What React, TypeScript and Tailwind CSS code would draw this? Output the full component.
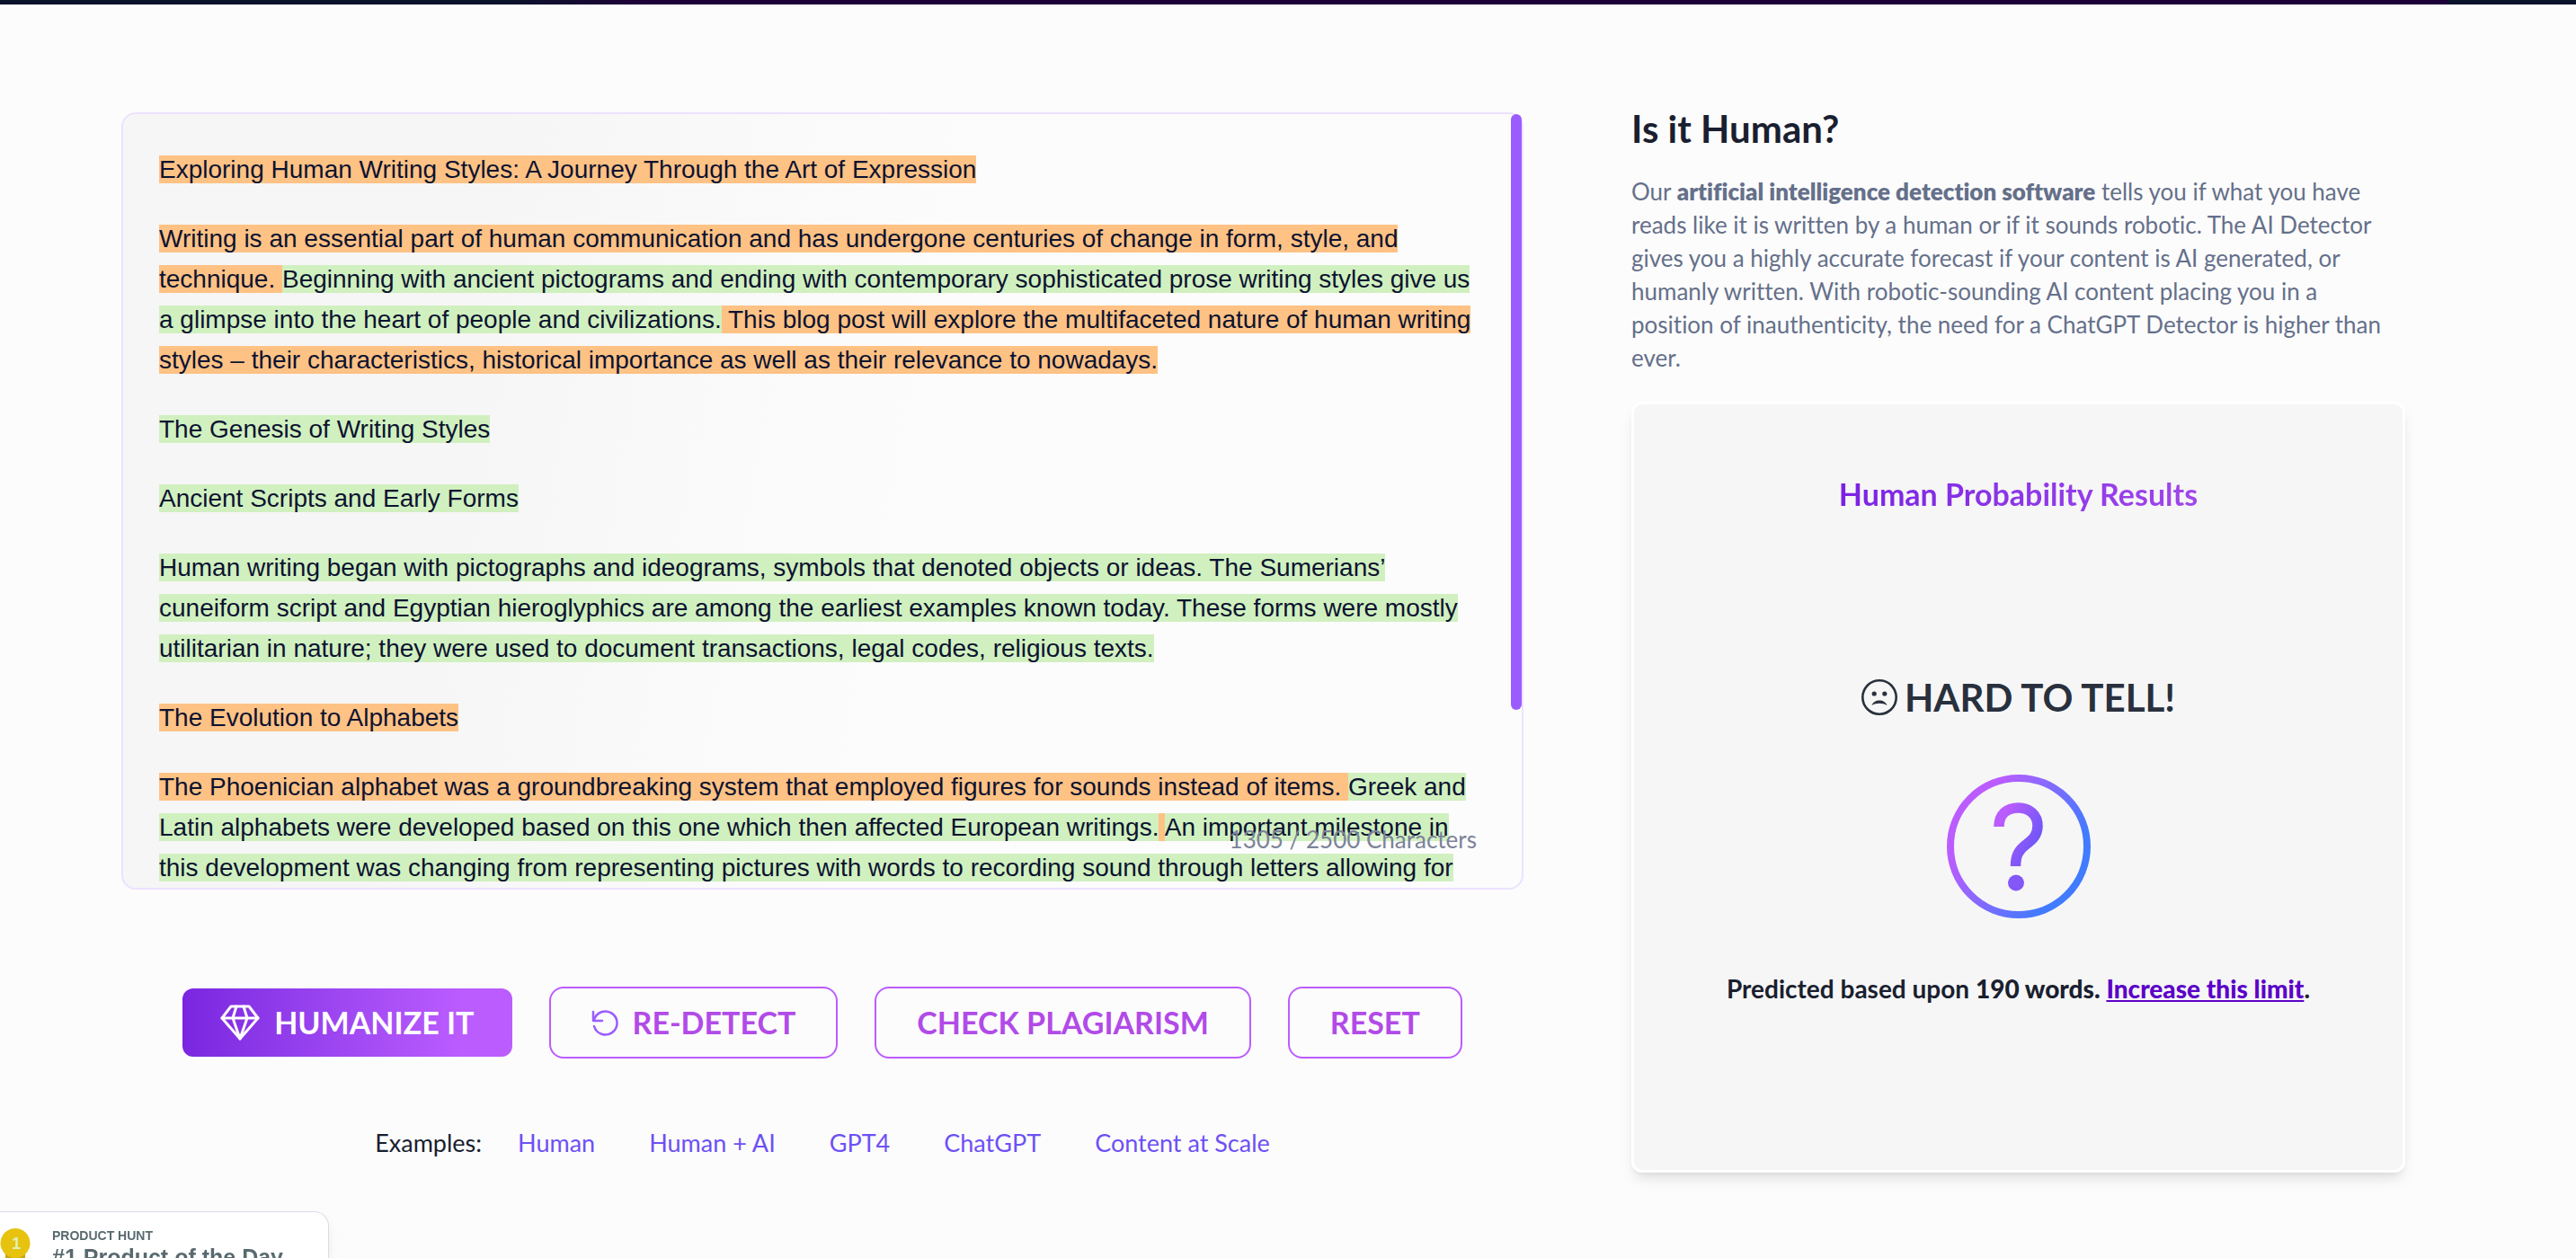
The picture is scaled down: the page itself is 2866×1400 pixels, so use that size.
import type { ReactNode } from 'react'

const examples = ['Human', 'Human + AI', 'GPT4', 'ChatGPT', 'Content at Scale']

function Human({ children }: { children: ReactNode }) {
  return <mark className="bg-[#d1f0c0] text-inherit">{children}</mark>
}

function Robot({ children }: { children: ReactNode }) {
  return <mark className="bg-[#ffc285] text-inherit">{children}</mark>
}

function DiamondIcon() {
  return (
    <svg viewBox="0 0 44 40" className="w-11 h-10" fill="none" stroke="currentColor" strokeWidth="3" strokeLinecap="round" strokeLinejoin="round" aria-hidden="true">
      <path d="M12 2h20l10 13-20 23L2 15Z" />
      <path d="M2 15h40M18 2l-4 13 8 23 8-23-4-13" />
    </svg>
  )
}

function RedoIcon() {
  return (
    <svg viewBox="0 0 30 30" className="w-[30px] h-[30px]" fill="none" stroke="#9b5cff" strokeWidth="2.5" strokeLinecap="round" strokeLinejoin="round" aria-hidden="true">
      <path d="M2 3v10h10" />
      <path d="M3 12A13 13 0 1 1 3 19" />
    </svg>
  )
}

function SadIcon() {
  return (
    <svg viewBox="0 0 40 40" className="w-10 h-10" aria-hidden="true">
      <circle cx="20" cy="20" r="18.7" fill="none" stroke="currentColor" strokeWidth="2.6" />
      <circle cx="14.2" cy="16" r="2.6" fill="currentColor" />
      <circle cx="25.8" cy="16" r="2.6" fill="currentColor" />
      <path d="M11.5 29c2-7.5 15-7.5 17 0-4.5-3-12.5-3-17 0Z" fill="currentColor" />
    </svg>
  )
}

function QuestionIcon() {
  return (
    <svg viewBox="0 0 160 160" className="w-40 h-40" fill="none" aria-hidden="true">
      <defs>
        <linearGradient id="ring" x1="30" y1="50" x2="130" y2="110" gradientUnits="userSpaceOnUse">
          <stop offset="0" stopColor="#bb5cff" />
          <stop offset="1" stopColor="#417bff" />
        </linearGradient>
        <linearGradient id="mark" x1="58" y1="56" x2="112" y2="82" gradientUnits="userSpaceOnUse">
          <stop offset="0" stopColor="#bb5cff" />
          <stop offset="1" stopColor="#5b55f5" />
        </linearGradient>
      </defs>
      <circle cx="80" cy="80" r="76" stroke="url(#ring)" strokeWidth="8" />
      <path d="M58 58C58 44 67 37 79.5 37C92 37 101 45 101 57C101 67 96 72 88 78C80 84 76.5 90 76.5 102" stroke="url(#mark)" strokeWidth="11.5" />
      <circle cx="77" cy="120.5" r="9" fill="#8457f8" />
    </svg>
  )
}

function MedalIcon() {
  return (
    <svg viewBox="0 0 34 48" className="w-[34px] h-12 shrink-0" aria-hidden="true">
      <path d="M6 26v20l11-6 11 6V26Z" fill="#c9a50e" />
      <circle cx="17" cy="16.5" r="16.5" fill="#e7c20f" />
      <text x="18" y="23" textAnchor="middle" fontSize="18" fontWeight="700" fontFamily="Liberation Sans" fill="#dcf3b8">1</text>
    </svg>
  )
}

function Editor() {
  return (
    <div className="relative rounded-2xl border-2 border-[#ece2ff] bg-[linear-gradient(100deg,#f6f6f6_25%,#fcfcfc_55%)]">
      <div className="pt-[39px] pl-10 pr-12 font-['Liberation_Sans',Helvetica,sans-serif] text-[28px] leading-[45px] text-[#0c1330] space-y-8">
        <p><Robot>Exploring Human Writing Styles: A Journey Through the Art of Expression</Robot></p>
        <p>
          <Robot>Writing is an essential part of human communication and has undergone centuries of change in form, style, and technique. </Robot>
          <Human>Beginning with ancient pictograms and ending with contemporary sophisticated prose writing styles give us a glimpse into the heart of people and civilizations.</Human>
          <Robot> This blog post will explore the multifaceted nature of human writing styles – their characteristics, historical importance as well as their relevance to nowadays.</Robot>
        </p>
        <p><Human>The Genesis of Writing Styles</Human></p>
        <p><Human>Ancient Scripts and Early Forms</Human></p>
        <p>
          <Human>Human writing began with pictographs and ideograms, symbols that denoted objects or ideas. The Sumerians’ cuneiform script and Egyptian hieroglyphics are among the earliest examples known today. These forms were mostly utilitarian in nature; they were used to document transactions, legal codes, religious texts.</Human>
        </p>
        <p><Robot>The Evolution to Alphabets</Robot></p>
        <p>
          <Robot>The Phoenician alphabet was a groundbreaking system that employed figures for sounds instead of items. </Robot>
          <Human>Greek and Latin alphabets were developed based on this one which then affected European writings.</Human>
          <Robot> </Robot>
          <Human>An important milestone in this development was changing from representing pictures with words to recording sound through letters allowing for</Human>
        </p>
      </div>
      {/* Scrollbar thumb */}
      <div className="absolute top-0 right-0 h-[77%] w-3 rounded-full bg-[#9b5cff]" />
      <p className="absolute right-[50px] bottom-9 text-[26px] leading-9 text-[#7c8399]">1305 / 2500 Characters</p>
    </div>
  )
}

const outlineButton =
  'flex items-center gap-4 h-20 px-[45px] rounded-2xl border-2 border-[#bb5cff] text-[#b14be8] text-[34px] leading-10 font-bold'

function Actions() {
  return (
    <div className="mt-[108px] flex items-center justify-center gap-[41px]">
      <button className="flex items-center gap-4 h-[76px] px-[42px] rounded-xl bg-linear-to-r from-[#7a25e0] to-[#bb5cff] to-85% text-white text-[34px] leading-10 font-bold">
        <DiamondIcon />
        HUMANIZE IT
      </button>
      <button className={outlineButton}>
        <RedoIcon />
        RE-DETECT
      </button>
      <button className={outlineButton}>CHECK PLAGIARISM</button>
      <button className={outlineButton}>RESET</button>
    </div>
  )
}

function Results() {
  return (
    <section className="mt-[30px] flex-1 rounded-xl border-3 border-white bg-[#f6f6f6] shadow-lg flex flex-col items-center">
      <h3 className="mt-20 text-[34px] leading-10 font-bold bg-linear-to-r from-[#7a20e4] to-[#a046ea] bg-clip-text text-transparent">
        Human Probability Results
      </h3>
      <p className="mt-[180px] flex items-center gap-2 text-[42px] leading-[52px] font-bold text-[#29303d]">
        <SadIcon />
        HARD TO TELL!
      </p>
      <div className="mt-[60px]">
        <QuestionIcon />
      </div>
      <p className="mt-[60px] text-[28px] leading-9 font-bold text-[#1a1f30]">
        Predicted based upon <b className="font-black">190 words.</b>{' '}
        <a href="#" className="font-black text-[#5b00c9] underline">Increase this limit</a>.
      </p>
    </section>
  )
}

function ProductHuntBadge() {
  return (
    <a href="#" className="fixed left-0 bottom-0 flex gap-6 w-[366px] h-[52px] overflow-hidden rounded-tr-2xl border-t border-r border-[#dcdce6] bg-white pt-[18px] shadow-lg font-['Liberation_Sans',Helvetica,sans-serif] font-bold text-[#586a70]">
      <MedalIcon />
      <span className="flex flex-col">
        <span className="text-sm leading-4">PRODUCT HUNT</span>
        <span className="mt-0.5 text-[25px] leading-7 whitespace-nowrap">#1 Product of the Day</span>
      </span>
    </a>
  )
}

export default function App() {
  return (
    <div className="min-h-screen bg-[#fcfcfc] font-[Lato,sans-serif] [font-variant-ligatures:none]">
      <div className="h-[5px] bg-linear-to-r from-[#0a122c] from-20% via-[#1e0038] via-25% to-[#1e0038] to-90%">
        <div className="ml-auto h-full w-[5%] bg-[#0a122c]" />
      </div>
      <main className="grid grid-cols-[1560fr_861fr] gap-x-[120px] pt-[120px] pl-[135px] pr-[190px]">
        <div className="pb-[15px]">
          <Editor />
          <Actions />
          <div className="mt-[76px] flex justify-center gap-[60px] text-[27px] leading-9">
            <span className="-mr-5 text-[#1a1f30]">Examples:</span>
            {examples.map((name) => (
              <a key={name} href="#" className="text-[#6d50f5]">{name}</a>
            ))}
          </div>
        </div>
        <div className="flex flex-col">
          <h2 className="text-[42px] leading-9 font-bold text-[#1a1f30]">Is it Human?</h2>
          <p className="mt-[34px] text-[26px] leading-[37px] text-[#65708a]">
            Our <strong className="font-extrabold">artificial intelligence detection software</strong> tells you if what you have reads like it is written by a human or if it sounds robotic. The AI Detector gives you a highly accurate forecast if your content is AI generated, or humanly written. With robotic-sounding AI content placing you in a position of inauthenticity, the need for a ChatGPT Detector is higher than ever.
          </p>
          <Results />
        </div>
      </main>
      <ProductHuntBadge />
    </div>
  )
}
